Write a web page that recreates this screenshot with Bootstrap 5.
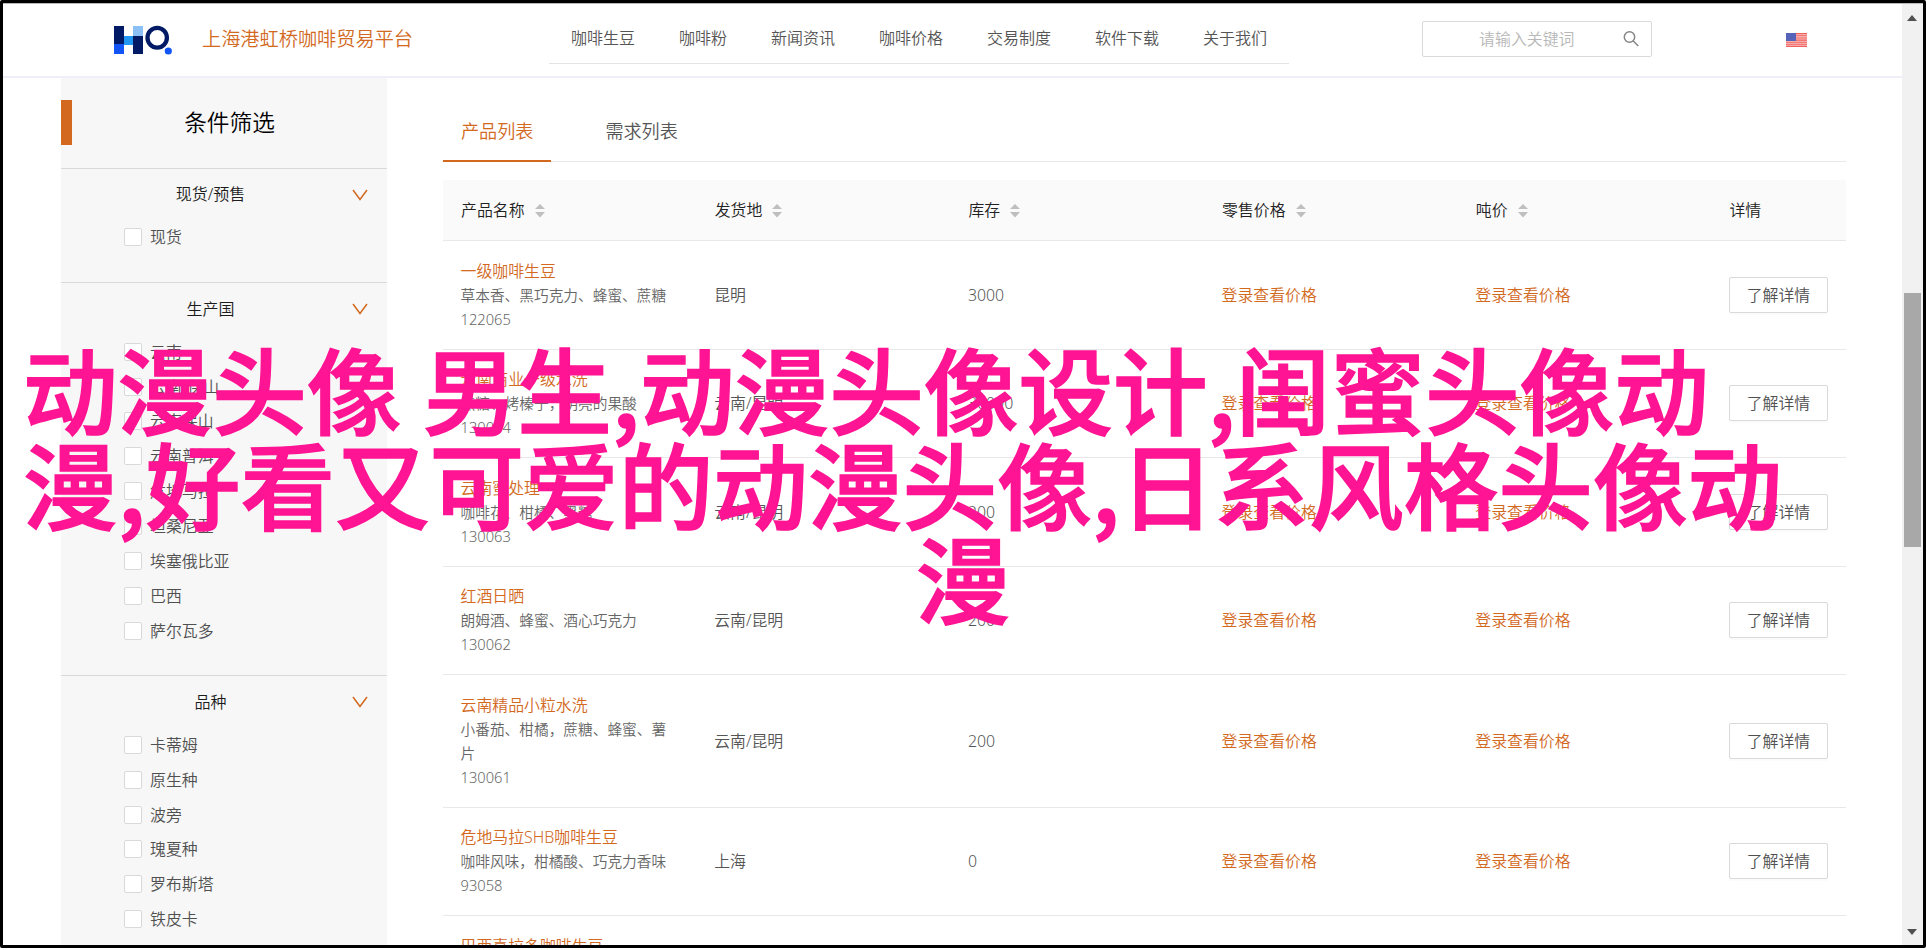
<!DOCTYPE html>
<html lang="zh-CN">
<head>
<meta charset="utf-8">
<title>上海港虹桥咖啡贸易平台</title>
<link href="https://cdn.jsdelivr.net/npm/bootstrap@5.3.0/dist/css/bootstrap.min.css" rel="stylesheet">
<style>
:root{--accent:#d2691e}
body{font-family:"Noto Sans","Noto Sans CJK SC",sans-serif;font-size:15.9px;font-weight:350;line-height:24px;color:#555;background:#fff;height:950px;overflow:hidden}
.frame{width:1926px;height:948px;border:3px solid #000;border-radius:2px;overflow:hidden}
.frame-top{border-top:1px solid #b9b9b9}
.site-head{height:74px;border-bottom:2px solid #eff0f7;padding-left:111px}
.logo{width:60px;height:30px}
.brand{width:375px;padding:0 0 2px 28px;font-size:19.200px;color:var(--accent)}
.main-nav{height:46px;margin-bottom:12px;border-bottom:1px solid #e4e4e4;padding-bottom:13px;font-size:16px}
.main-nav a{padding:0 22px;color:#4c4c4c;text-decoration:none}
.search{width:230px;height:36px;margin:0 0 3px 133px;border:1px solid #d9d9d9;border-radius:2px;padding:0 11px 0 32px;color:#b8b8b8}
.flag{margin-left:134px}
.side{width:326px;margin-left:58px;background:#f7f7f7}
.side-title{height:90px;border-left:11px solid transparent;font-size:22.700px;color:#000}
.side-title::before{content:"";position:absolute;left:-11px;top:22px;width:11px;height:45px;background:var(--accent)}
.grp{border-top:1px solid #d9d9d9;padding-bottom:27.4px}
.grp h2{height:51px;padding:1px 19px 0 8px;font-size:16px;font-weight:350;color:#1c1c1c;margin:0}
.opt{height:34.86px;padding-left:63px;gap:8px;color:#505050}
.opt i{width:18px;height:18px;background:#fff;border:1px solid #d9d9d9;border-radius:2px}
.content{width:1403px;margin-left:56px}
.tabs{height:84px;border-bottom:1px solid #e8e8e8;gap:36px;font-size:18.100px}
.tabs span{height:84px;padding:41px 18px 0}
.tabs .on{color:var(--accent);border-bottom:2px solid var(--accent);margin-bottom:-1px}
.goods{table-layout:fixed;margin-top:18px;width:100%;border-collapse:separate;border-spacing:0}
.goods th{height:61px;background:#fafafa;font-weight:350;color:#222;border-bottom:1px solid #e8e8e8;padding:0 18px}
.goods td{border-bottom:1px solid #e8e8e8;padding:17.500px 18px 18px 17.500px;vertical-align:middle}
.goods .name,.goods .price{color:var(--accent)}
.goods .desc{font-size:14.7px;color:#666}
.goods .sort{margin-left:10px;margin-top:2px}
.more{width:99px;height:36px;padding:0;border:1px solid #d9d9d9;border-radius:2px;background:#fff;color:#505050;font-weight:350;box-shadow:0 2px 0 rgba(0,0,0,.016)}
.bar{width:21px;background:#f1f1f1;padding:11px 1px 10px 0}
.thumb{width:17px;height:254px;background:#a8a8a8;margin-top:272px}
.caption{position:absolute;left:23px;top:340px;width:1880px;font:500 94.6px/94.5px "Noto Sans CJK SC",sans-serif;color:#ff1493;-webkit-text-stroke:1.500px #ff1493;white-space:pre}
</style>
</head>
<body>
<div class="frame d-flex"><div class="frame-top d-flex flex-fill">
<div class="flex-fill d-flex flex-column">
 <header class="site-head d-flex align-items-center flex-shrink-0">
  <svg class="logo" viewBox="0 0 60 30"><path fill="#001a66" d="M0 1h10v18H0zM19 11h10v18H19z"/><path fill="#1254f5" d="M0 19h10v10H0z"/><path fill="#2196f3" d="M10 11h9v9h-9z"/><path fill="#8bbff5" d="M19 1h10v10H19z"/><ellipse cx="43.200" cy="12.700" rx="9.700" ry="9.900" fill="none" stroke="#001a66" stroke-width="4.300"/><circle cx="54.300" cy="26" r="3.600" fill="#1254f5"/></svg>
  <div class="brand">上海港虹桥咖啡贸易平台</div>
  <nav class="main-nav d-flex align-items-end align-self-end"><a>咖啡生豆</a><a>咖啡粉</a><a>新闻资讯</a><a>咖啡价格</a><a>交易制度</a><a>软件下载</a><a>关于我们</a></nav>
  <div class="search d-flex align-items-center justify-content-between"><span class="ps-4">请输入关键词</span>
   <svg width="18" height="18" viewBox="0 0 18 18" fill="none" stroke="#858585" stroke-width="1.500"><circle cx="7.500" cy="7" r="5.200"/><path d="M11.300 11l5 5"/></svg></div>
  <svg class="flag" width="21" height="14" viewBox="0 0 21 14"><path fill="#fbc4c2" d="M0 0h21v14H0z"/><path stroke="#f0605c" stroke-width="1.100" d="M0 .6h21M0 2.800h21M0 5h21M0 7.100h21M0 9.200h21M0 11.300h21M0 13.400h21"/><path fill="#5763b8" d="M0 0h10v8H0z"/></svg>
 </header>
 <div class="d-flex flex-fill">
  <aside class="side">
   <div class="side-title position-relative d-flex align-items-center justify-content-center"><span>条件筛选</span></div>
   <div id="groups"></div>
  </aside>
  <main class="content">
   <div class="tabs d-flex"><span class="on">产品列表</span><span>需求列表</span></div>
   <table class="goods"><colgroup><col style="width:253.7px"><col style="width:253.7px"><col style="width:253.7px"><col style="width:253.7px"><col style="width:253.7px"><col></colgroup>
   <thead><tr id="heads"></tr></thead><tbody id="rows"></tbody></table>
  </main>
 </div>
</div>
<div class="bar d-flex flex-column align-items-center"><svg width="10" height="6"><path fill="#505050" d="M5 0l5 6H0z"/></svg><div class="thumb"></div><svg class="mt-auto" width="10" height="6"><path fill="#505050" d="M0 0h10L5 6z"/></svg></div>
</div></div>
<div class="caption"><div>动漫头像 男生,动漫头像设计,闺蜜头像动</div><div>漫,好看又可爱的动漫头像,日系风格头像动</div><div class="text-center">漫</div></div>
<script>
const groups=[['现货/预售',['现货']],['生产国',['云南','云南/保山','云南保山','云南普洱','危地马拉','坦桑尼亚','埃塞俄比亚','巴西','萨尔瓦多']],['品种',['卡蒂姆','原生种','波旁','瑰夏种','罗布斯塔','铁皮卡']]];
document.getElementById('groups').innerHTML=groups.map(([t,o])=>`<section class="grp"><h2 class="d-flex align-items-center"><span class="flex-fill text-center">${t}</span><svg width="16" height="12" viewBox="0 0 16 12" fill="none" stroke="#d2691e" stroke-width="1.500"><path d="M1 1l7 9.500L15 1"/></svg></h2>${o.map(x=>`<div class="opt d-flex align-items-center"><i></i><span>${x}</span></div>`).join('')}</section>`).join('');
const sort='<svg class="sort" width="10" height="14"><path fill="#bfbfbf" d="M5 0l5 5H0zM0 8h10L5 13.500z"/></svg>';
document.getElementById('heads').innerHTML=['产品名称','发货地','库存','零售价格','吨价','详情'].map((h,i)=>`<th><div class="d-flex align-items-center">${h}${i<5?sort:''}</div></th>`).join('');
const rows=[['一级咖啡生豆','草本香、黑巧克力、蜂蜜、蔗糖','122065','昆明','3000'],['云南商业一级水洗','焦糖、烤榛子，明亮的果酸','130064','云南/昆明','30000'],['云南蜜处理','咖啡花、柑橘、黑糖','130063','云南/昆明','200'],['红酒日晒','朗姆酒、蜂蜜、酒心巧克力','130062','云南/昆明','200'],['云南精品小粒水洗','小番茄、柑橘，蔗糖、蜂蜜、薯片','130061','云南/昆明','200'],['危地马拉SHB咖啡生豆','咖啡风味，柑橘酸、巧克力香味','93058','上海','0'],['巴西喜拉多咖啡生豆']];
document.getElementById('rows').innerHTML=rows.map(r=>r.length<2?`<tr><td><div class="name">${r[0]}</div></td><td colspan="5"></td></tr>`:`<tr><td><div class="name">${r[0]}</div><div class="desc">${r[1]}</div><div class="desc">${r[2]}</div></td><td>${r[3]}</td><td>${r[4]}</td><td class="price">登录查看价格</td><td class="price">登录查看价格</td><td><button class="more">了解详情</button></td></tr>`).join('');
</script>
<script src="https://cdn.jsdelivr.net/npm/bootstrap@5.3.0/dist/js/bootstrap.bundle.min.js"></script>
</body>
</html>
